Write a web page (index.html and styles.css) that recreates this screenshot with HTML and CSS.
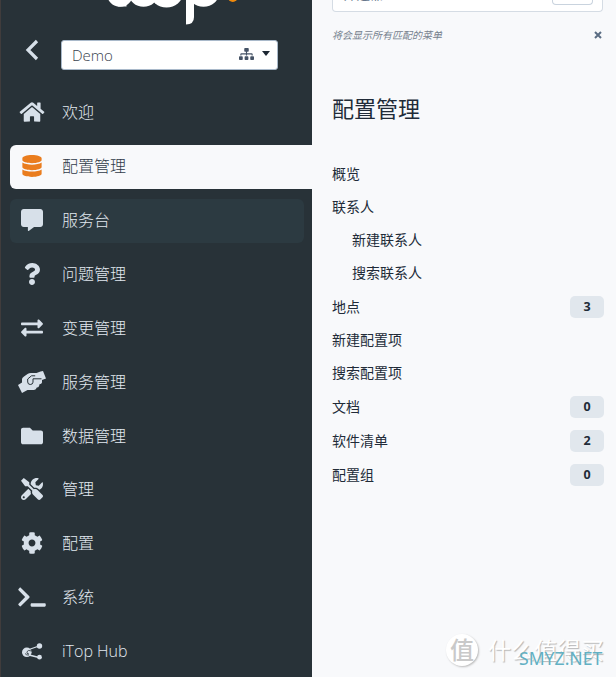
FILE: index.html
```
<!DOCTYPE html>
<html lang="zh-CN">
<head>
<meta charset="utf-8">
<title>iTop</title>
<link rel="stylesheet" href="styles.css">
</head>
<body>
<div class="app">
  <aside class="sidebar">
    <header class="brand">
      <svg class="logo" viewBox="0 0 150 26" width="150" height="26">
        <g fill="#fff">
          <ellipse cx="20" cy="-6" rx="13" ry="12.700"/>
          <rect x="18" y="0" width="8.500" height="6.500"/>
          <ellipse cx="43.500" cy="-6" rx="14.500" ry="12.700"/>
          <ellipse cx="66.500" cy="-6" rx="16" ry="13.400"/>
          <path d="M86 0h8v17q0 7.500-8 7.500z"/>
          <ellipse cx="103.500" cy="-7" rx="15.500" ry="13.700"/>
        </g>
        <circle cx="132.800" cy="-3" r="5" fill="#f08a0c"/>
      </svg>
    </header>
    <div class="org">
      <svg class="back" viewBox="0 0 14 22"><path d="M12 2 3 11l9 9" fill="none" stroke="#d7e0e9" stroke-width="3.2"/></svg>
      <div class="select">
        <span class="org-name">Demo</span>
        <svg class="tree" viewBox="0 0 640 512"><path d="M128 352H32c-17.67 0-32 14.33-32 32v96c0 17.67 14.33 32 32 32h96c17.67 0 32-14.33 32-32v-96c0-17.67-14.33-32-32-32zm-24-80h192v48h48v-48h192v48h48v-57.59c0-21.17-17.23-38.41-38.41-38.41H344v-64h40c17.67 0 32-14.33 32-32V32c0-17.67-14.33-32-32-32H256c-17.67 0-32 14.33-32 32v96c0 17.67 14.33 32 32 32h40v64H94.41C73.23 224 56 241.23 56 262.41V320h48v-48zm264 80h-96c-17.67 0-32 14.33-32 32v96c0 17.67 14.33 32 32 32h96c17.67 0 32-14.33 32-32v-96c0-17.67-14.33-32-32-32zm240 0h-96c-17.67 0-32 14.33-32 32v96c0 17.67 14.33 32 32 32h96c17.67 0 32-14.33 32-32v-96c0-17.67-14.33-32-32-32z"/></svg>
        <span class="caret"></span>
      </div>
    </div>
    <nav class="menu">
      <a class="item"><svg class="icon" viewBox="0 0 576 512"><path d="M280.37 148.26L96 300.11V464a16 16 0 0 0 16 16l112.06-.29a16 16 0 0 0 15.92-16V368a16 16 0 0 1 16-16h64a16 16 0 0 1 16 16v95.64a16 16 0 0 0 16 16.05L464 480a16 16 0 0 0 16-16V300L295.67 148.26a12.19 12.19 0 0 0-15.3 0zM571.6 251.47L488 182.56V44.05a12 12 0 0 0-12-12h-56a12 12 0 0 0-12 12v72.61L318.47 43a48 48 0 0 0-61 0L4.34 251.47a12 12 0 0 0-1.6 16.9l25.5 31A12 12 0 0 0 45.15 301l235.22-193.74a12.19 12.19 0 0 1 15.3 0L530.9 301a12 12 0 0 0 16.9-1.6l25.5-31a12 12 0 0 0-1.7-16.93z"/></svg><span>欢迎</span></a>
      <a class="item active"><svg class="icon" viewBox="0 0 448 512"><path d="M448 73.143v45.714C448 159.143 347.667 192 224 192S0 159.143 0 118.857V73.143C0 32.857 100.333 0 224 0s224 32.857 224 73.143zM448 176v102.857C448 319.143 347.667 352 224 352S0 319.143 0 278.857V176c48.125 33.143 136.208 48.572 224 48.572S399.874 209.143 448 176zm0 160v102.857C448 479.143 347.667 512 224 512S0 479.143 0 438.857V336c48.125 33.143 136.208 48.572 224 48.572S399.874 369.143 448 336z"/></svg><span>配置管理</span></a>
      <a class="item hover"><svg class="icon" viewBox="0 0 512 512"><path d="M448 0H64C28.7 0 0 28.7 0 64v288c0 35.300 28.700 64 64 64h96v84c0 9.800 11.200 15.500 19.100 9.700L304 416h144c35.300 0 64-28.700 64-64V64c0-35.300-28.700-64-64-64z"/></svg><span>服务台</span></a>
      <a class="item"><svg class="icon" viewBox="0 0 384 512"><path d="M202.021 0C122.202 0 70.503 32.703 29.914 91.026c-7.363 10.580-5.093 25.086 5.178 32.874l43.138 32.709c10.373 7.865 25.132 6.026 33.253-4.148 25.049-31.381 43.630-49.449 82.757-49.449 30.764 0 68.816 19.799 68.816 49.631 0 22.552-18.617 34.134-48.993 51.164-35.423 19.860-82.299 44.576-82.299 106.405V320c0 13.255 10.745 24 24 24h72.471c13.255 0 24-10.745 24-24v-5.773c0-42.860 125.268-44.645 125.268-160.627C377.504 66.256 286.902 0 202.021 0zM192 373.459c-38.196 0-69.271 31.075-69.271 69.271 0 38.195 31.075 69.270 69.271 69.270s69.271-31.075 69.271-69.271-31.075-69.270-69.271-69.270z"/></svg><span>问题管理</span></a>
      <a class="item"><svg class="icon" viewBox="0 0 512 512"><path d="M0 168v-16c0-13.255 10.745-24 24-24h360V80c0-21.367 25.899-32.042 40.971-16.971l80 80c9.372 9.373 9.372 24.569 0 33.941l-80 80C409.956 271.982 384 261.456 384 240v-48H24c-13.255 0-24-10.745-24-24zm488 152H128v-48c0-21.314-25.862-32.080-40.971-16.971l-80 80c-9.372 9.373-9.372 24.569 0 33.941l80 80C102.057 463.997 128 453.437 128 432v-48h360c13.255 0 24-10.745 24-24v-16c0-13.255-10.745-24-24-24z"/></svg><span>变更管理</span></a>
      <a class="item"><svg class="icon hands" viewBox="0 0 28 24"><path d="M0 15 4 12.500V9Q4.200 7.500 6 6.500L9.500 4Q11 3 13 3h5.500L22.500 1.500 25 1l3 7.500-4 1.500v2.500q-.4 1.700-2.500 1.800l-.4 1.700q-.7 1.500-2.300 1.500-.6 2-2.800 2.500H9.500L4 23Z"/><path d="M23.500 8.800H15v3.400q-.2 2.300-2.700 2.300T9.700 12V9l3.800-3.200h3.700" fill="none" stroke="#283238" stroke-width="1"/></svg><span>服务管理</span></a>
      <a class="item"><svg class="icon" viewBox="0 0 512 512"><path d="M464 128H272l-64-64H48C21.490 64 0 85.490 0 112v288c0 26.510 21.490 48 48 48h416c26.510 0 48-21.490 48-48V176c0-26.510-21.490-48-48-48z"/></svg><span>数据管理</span></a>
      <a class="item tools"><svg class="icon" viewBox="0 0 512 512"><path d="M501.100 395.700L384 278.600c-23.100-23.100-57.600-27.600-85.400-13.900L192 158.100V96L64 0 0 64l96 128h62.100l106.600 106.600c-13.600 27.800-9.200 62.300 13.900 85.400l117.100 117.100c14.600 14.600 38.200 14.600 52.700 0l52.700-52.700c14.500-14.600 14.500-38.200 0-52.700zM331.700 225c28.300 0 54.900 11 74.900 31l19.400 19.400c15.800-6.900 30.800-16.500 43.800-29.500 37.100-37.100 49.700-89.300 37.900-136.700-2.200-9-13.500-12.100-20.100-5.500l-74.400 74.400-67.900-11.300L334 98.900l74.400-74.400c6.600-6.600 3.400-17.900-5.700-20.200-47.400-11.700-99.600.9-136.600 37.900-28.500 28.500-41.900 66.100-41.200 103.600l82.100 82.100c8.100-1.900 16.500-2.900 24.700-2.900zm-103.900 82l-56.700-56.700L18.700 402.800c-25 25-25 65.500 0 90.500s65.500 25 90.500 0l123.600-123.600c-7.600-19.900-9.900-41.600-5-62.700zM64 472c-13.200 0-24-10.800-24-24 0-13.300 10.700-24 24-24s24 10.700 24 24c0 13.200-10.700 24-24 24z"/></svg><span>管理</span></a>
      <a class="item"><svg class="icon" viewBox="0 0 512 512"><path d="M487.400 315.700l-42.600-24.600c4.300-23.200 4.300-47 0-70.200l42.600-24.600c4.900-2.800 7.100-8.600 5.500-14-11.100-35.600-30-67.800-54.700-94.600-3.800-4.100-10-5.100-14.800-2.300L380.800 110c-17.900-15.400-38.500-27.300-60.800-35.100V25.800c0-5.600-3.900-10.500-9.400-11.700-36.700-8.200-74.300-7.800-109.200 0-5.500 1.200-9.400 6.100-9.400 11.700V75c-22.200 7.900-42.800 19.800-60.800 35.100L88.700 85.500c-4.900-2.800-11-1.900-14.800 2.300-24.700 26.700-43.600 58.900-54.700 94.600-1.700 5.400.6 11.200 5.500 14L67.300 221c-4.300 23.200-4.300 47 0 70.200l-42.600 24.600c-4.900 2.800-7.100 8.600-5.500 14 11.100 35.600 30 67.800 54.700 94.600 3.800 4.100 10 5.100 14.800 2.300l42.600-24.600c17.900 15.400 38.500 27.300 60.800 35.100v49.200c0 5.600 3.900 10.500 9.400 11.700 36.700 8.200 74.300 7.800 109.200 0 5.500-1.200 9.400-6.100 9.400-11.700v-49.200c22.200-7.900 42.800-19.800 60.800-35.100l42.600 24.600c4.900 2.800 11 1.900 14.800-2.300 24.700-26.700 43.600-58.900 54.700-94.600 1.500-5.500-.7-11.300-5.600-14.100zM256 336c-44.100 0-80-35.900-80-80s35.900-80 80-80 80 35.900 80 80-35.900 80-80 80z"/></svg><span>配置</span></a>
      <a class="item"><svg class="icon terminal" viewBox="0 0 640 512"><path d="M257.981 272.971L63.638 467.314c-9.373 9.373-24.569 9.373-33.941 0L7.029 444.647c-9.357-9.357-9.375-24.522-.04-33.901L161.011 256 6.990 101.255c-9.335-9.379-9.317-24.544.04-33.901l22.667-22.667c9.373-9.373 24.569-9.373 33.941 0L257.981 239.030c9.373 9.372 9.373 24.568 0 33.941zM640 456v-32c0-13.255-10.745-24-24-24H312c-13.255 0-24 10.745-24 24v32c0 13.255 10.745 24 24 24h304c13.255 0 24-10.745 24-24z"/></svg><span>系统</span></a>
      <a class="item"><svg class="icon hub" viewBox="0 0 22 17"><path d="M6.500 7 18 3M6 11.500l12 3" fill="none" stroke="#d7e0e9" stroke-width="1.300"/><circle cx="5.800" cy="9.300" r="4.800"/><circle cx="18.500" cy="3" r="2.700"/><circle cx="18.500" cy="14.200" r="2.400"/><path d="M10.500 8q-3.500-1.500-4.500.7t2 2.300M4 10.500q1.500 2 4 1.500" fill="none" stroke="#283238" stroke-width=".8"/></svg><span>iTop Hub</span></a>
    </nav>
  </aside>
  <main class="panel">
    <div class="filter"><span class="placeholder">筛选器</span><span class="key"></span></div>
    <div class="hint"><em>将会显示所有匹配的菜单</em><svg class="close" viewBox="0 0 8 8"><path d="m1 1 6 6M7 1 1 7" stroke="#5b6d83" stroke-width="2"/></svg></div>
    <h1>配置管理</h1>
    <ul class="links">
      <li>概览</li>
      <li>联系人</li>
      <li class="child">新建联系人</li>
      <li class="child">搜索联系人</li>
      <li class="counted">地点<b>3</b></li>
      <li>新建配置项</li>
      <li>搜索配置项</li>
      <li class="counted">文档<b>0</b></li>
      <li class="counted">软件清单<b>2</b></li>
      <li class="counted">配置组<b>0</b></li>
    </ul>
  </main>
  <div class="watermark"><span class="seal">值</span><span class="wm-name">什么值得买</span></div>
  <div class="site">SMYZ.NET</div>
</div>
</body>
</html>
```
FILE: styles.css
```
* { box-sizing: border-box; }
body { margin: 0; font-family: "Open Sans", "Noto Sans CJK SC", sans-serif; background: #f8f9fb; }
.app { position: relative; display: flex; width: 616px; height: 677px; overflow: hidden; }
.sidebar { width: 312px; background: #283238; border-left: 1px solid #403c3c; flex: none; }
.brand { height: 40px; padding-left: 99px; }
.logo { display: block; overflow: hidden; }
.org { display: flex; height: 51.300px; padding-left: 24px; }
.back { width: 14px; height: 22px; margin-right: 22px; margin-top: -1px; }
.select { display: flex; align-items: center; width: 217px; height: 30px; padding: 0 7px 0 10px; background: #fff; border: 1px solid #a9b9ca; border-radius: 3px; }
.org-name { flex: 1; color: #38424e; font-size: 15px; font-weight: 300; }
.tree { width: 15px; height: 12px; fill: #455265; margin: -3px 8px 0 0; }
.caret { border: 4px solid transparent; border-top: 5px solid #1d2733; border-bottom: 0; margin-top: -4px; }
.menu { display: flex; flex-direction: column; gap: 9.900px; padding-left: 9px; }
.item { display: flex; align-items: center; height: 44px; margin-right: 8px; border-radius: 6px; color: #e2e9f0; font-size: 16px; font-weight: 300; }
.item span { line-height: 22px; margin-top: -2px; }
.icon { width: 44px; height: 22px; margin-right: 8px; margin-top: -2px; fill: #d7e0e9; flex: none; }
.item .hands { height: 24px; }
.item .hub { height: 17px; margin-top: -1px; }
.tools .icon { margin-top: -4px; }
.tools span { margin-top: -3px; }
.active { margin-right: 0; border-radius: 6px 0 0 6px; background: #f8f9fb; color: #303b49; }
.active .icon { fill: #ea7d1e; }
.hover { background: #2c3a41; }
.panel { flex: 1; padding: 0 12px 0 20px; color: #212b38; }
.filter { display: flex; justify-content: space-between; height: 12px; margin-right: 1px; padding: 0 9px 0 10px; border: 1px solid #d5dce4; border-top: 0; border-radius: 0 0 4px 4px; background: #fff; overflow: hidden; }
.placeholder { margin-top: -17px; color: #68788d; font-size: 13.500px; line-height: 22px; }
.key { width: 41px; height: 5px; border: 1px solid #c9d3de; border-top: 0; border-radius: 0 0 4px 4px; }
.hint { display: flex; align-items: center; justify-content: space-between; height: 20px; margin-top: 12px; padding-right: 2px; color: #76818e; font-size: 10px; }
.close { width: 8px; height: 8px; margin-top: 1px; }
h1 { margin: 49px 0 33px; font-size: 22px; line-height: 31px; font-weight: 400; }
.links { list-style: none; margin: 0; padding: 0; font-size: 14px; }
.links li { display: flex; align-items: center; justify-content: space-between; height: 33px; line-height: 20px; }
.links .counted { height: 34px; padding-top: 1px; }
.links .child { padding-left: 20px; }
.links b { width: 34px; height: 22px; border-radius: 5px; background: #e1e7ed; font: 700 12.500px/22px "Open Sans", sans-serif; text-align: center; }
.watermark { position: absolute; left: 446px; top: 634px; display: flex; align-items: center; gap: 10px; }
.seal { width: 32px; height: 32px; border-radius: 50%; background: #fff; box-shadow: 1px 1px 2px #bbb; color: #c9c9c9; font-size: 24px; line-height: 31px; font-weight: 500; text-align: center; }
.wm-name { color: #fff; font-size: 23.200px; line-height: 32px; text-shadow: 1px 1px 1px #b5b5b5; }
.site { position: absolute; left: 519px; top: 648px; color: #62b0c3; font: 17.600px/20px "Noto Sans", sans-serif; }
```
